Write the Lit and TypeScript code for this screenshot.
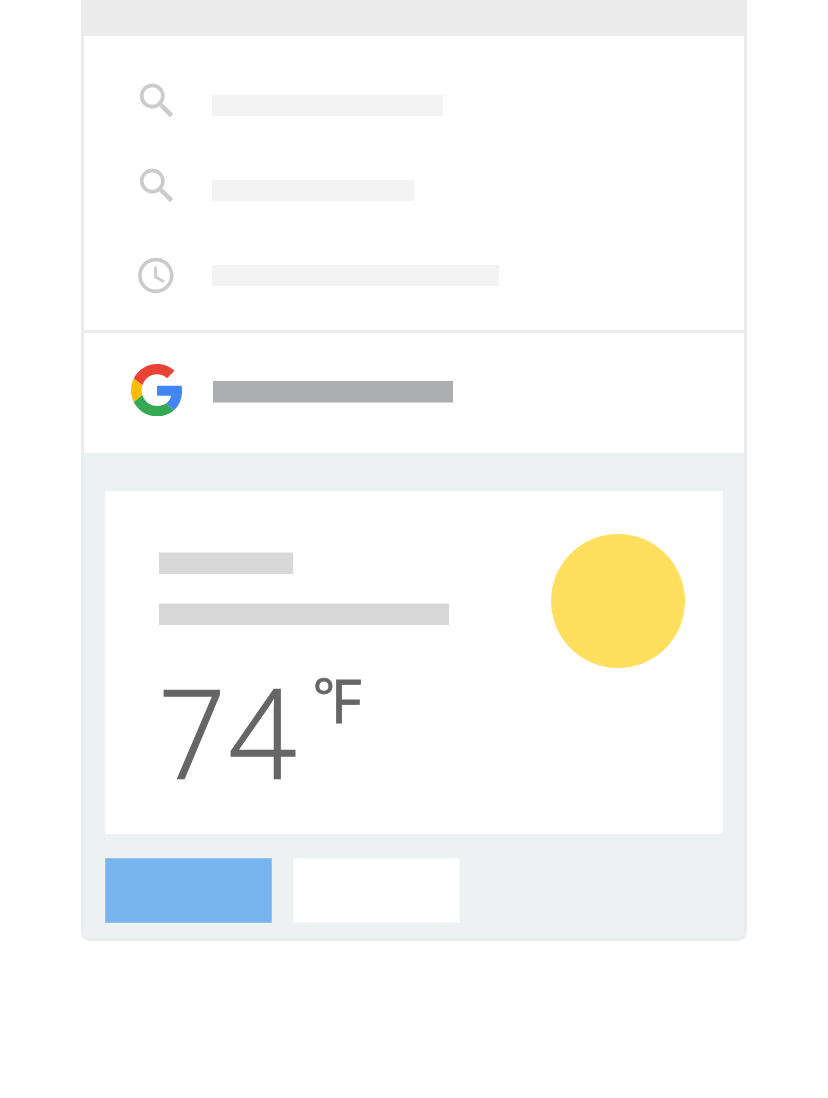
import { LitElement, html, css, svg } from "lit";
import { customElement } from "lit/decorators.js";

const searchIcon = svg`
  <circle cx="14.3" cy="13" r="10.55" fill="none" stroke="#cbcbcb" stroke-width="3.7"></circle>
  <path d="M22.9 21.9 33.6 32.6" fill="none" stroke="#cbcbcb" stroke-width="4.6"></path>`;

const clockIcon = svg`
  <circle cx="17.8" cy="17.5" r="15.9" fill="none" stroke="#cbcbcb" stroke-width="3.6"></circle>
  <path d="M17.5 8.6V19L26 23.7" fill="none" stroke="#cbcbcb" stroke-width="2.7"></path>`;

const suggestions = [
  { icon: searchIcon, width: 231 },
  { icon: searchIcon, width: 202 },
  { icon: clockIcon, width: 287 },
];

@customElement("app-root")
export class AppRoot extends LitElement {
  static styles = css`
    :host {
      display: block;
      height: 1098px;
      background: #fff;
      overflow: hidden;
      font-family: "Open Sans", "Noto Sans", sans-serif;
    }
    .panel {
      box-sizing: border-box;
      width: 666px;
      height: 941px;
      margin-left: 81px;
      border: 3px solid #ececec;
      border-top: 0;
      border-radius: 0 0 9px 9px;
      display: flex;
      flex-direction: column;
      overflow: hidden;
    }
    .bar { height: 36px; flex: none; background: #ececec; }
    .list {
      box-sizing: border-box;
      height: 297px;
      flex: none;
      padding: 47px 0 0 54px;
      border-bottom: 3px solid #ececec;
    }
    .row { display: flex; gap: 38px; height: 85.4px; }
    .row:last-child { padding-top: 4px; }
    .row:last-child .line { margin-top: 7px; }
    .icon { width: 36px; height: 36px; flex: none; display: block; }
    .line { height: 21px; margin-top: 11.6px; background: #f3f3f3; }
    .app {
      box-sizing: border-box;
      height: 120px;
      flex: none;
      display: flex;
      gap: 31px;
      padding: 31px 0 0 47px;
    }
    .logo { width: 51px; height: 52.4px; display: block; }
    .name {
      box-sizing: border-box;
      width: 240px;
      height: 22px;
      margin-top: 17px;
      background: #adaeb0;
      border-bottom: 1px solid #d6d7d8;
    }
    .content { flex: 1; background: #edf1f2; padding: 38px 21px 0; }
    .card {
      box-sizing: border-box;
      height: 343px;
      width: 618px;
      background: #fff;
      border: solid #f9fafb;
      border-width: 0 1px;
      display: flex;
      justify-content: space-between;
      padding: 43px 37px 0 53px;
    }
    .place, .date { box-sizing: border-box; height: 22px; background: #d8d8d8; border-top: 1px solid #ededed; }
    .place { width: 134px; margin-top: 18px; }
    .date { width: 290px; margin-top: 29px; }
    .sun { display: block; width: 134px; height: 134px; flex: none; }
    .weather { display: flex; color: #666; margin-top: 41px; }
    .digits {
      display: block;
      width: 155px;
      margin-left: -1.2px;
      font-size: 124px;
      font-weight: 300;
      line-height: 130px;
      letter-spacing: 2.6px;
      -webkit-text-stroke: 1.4px #666;
      transform: scaleX(0.96);
      transform-origin: 0 0;
    }
    .unit {
      display: flex;
      padding-top: 4px;
      line-height: 61px;
      -webkit-text-stroke: 0.8px #666;
    }
    .degree { width: 18px; font-size: 52px; margin-top: -5.5px; }
    .scale { font-size: 60px; }
    .actions { display: flex; gap: 21px; margin-top: 24px; }
    .button { box-sizing: border-box; width: 167px; height: 65px; background: #fff; border: 1px solid #f8f9fa; }
    .primary { background: #78b4ee; border-color: #93c3f0; }
  `;

  render() {
    return html`
      <div class="panel">
        <div class="bar"></div>
        <div class="list">
          ${suggestions.map(
            (s) => html`<div class="row">
              <svg class="icon" viewBox="0 0 36 36">${s.icon}</svg>
              <div class="line" style="width:${s.width}px"></div>
            </div>`
          )}
        </div>
        <div class="app">
          <svg class="logo" viewBox="0 0 46.98 48" preserveAspectRatio="none">
            <path fill="#ea4335" d="M24 9.5c3.54 0 6.71 1.22 9.21 3.6l6.85-6.85C35.9 2.38 30.47 0 24 0 14.62 0 6.51 5.38 2.56 13.22l7.98 6.19C12.43 13.72 17.74 9.5 24 9.5z"></path>
            <path fill="#4285f4" d="M46.98 24.55c0-1.57-.15-3.09-.38-4.55H24v9.02h12.94c-.58 2.96-2.26 5.48-4.78 7.18l7.73 6c4.51-4.18 7.09-10.36 7.09-17.65z"></path>
            <path fill="#fbbc05" d="M10.53 28.59c-.48-1.45-.76-2.99-.76-4.59s.27-3.14.76-4.59l-7.98-6.19C.92 16.46 0 20.12 0 24c0 3.88.92 7.54 2.56 10.78l7.97-6.19z"></path>
            <path fill="#34a853" d="M24 48c6.48 0 11.93-2.13 15.89-5.81l-7.73-6c-2.15 1.45-4.92 2.3-8.16 2.3-6.26 0-11.57-4.22-13.47-9.91l-7.98 6.19C6.51 42.62 14.62 48 24 48z"></path>
          </svg>
          <div class="name"></div>
        </div>
        <div class="content">
          <div class="card">
            <div>
              <div class="place"></div>
              <div class="date"></div>
              <div class="weather">
                <span class="digits">74</span>
                <span class="unit"><span class="degree">°</span><span class="scale">F</span></span>
              </div>
            </div>
            <svg class="sun" viewBox="0 0 134 134"><circle cx="67" cy="67" r="67" fill="#ffdf5d"></circle></svg>
          </div>
          <div class="actions">
            <div class="button primary"></div>
            <div class="button"></div>
          </div>
        </div>
      </div>
    `;
  }
}
